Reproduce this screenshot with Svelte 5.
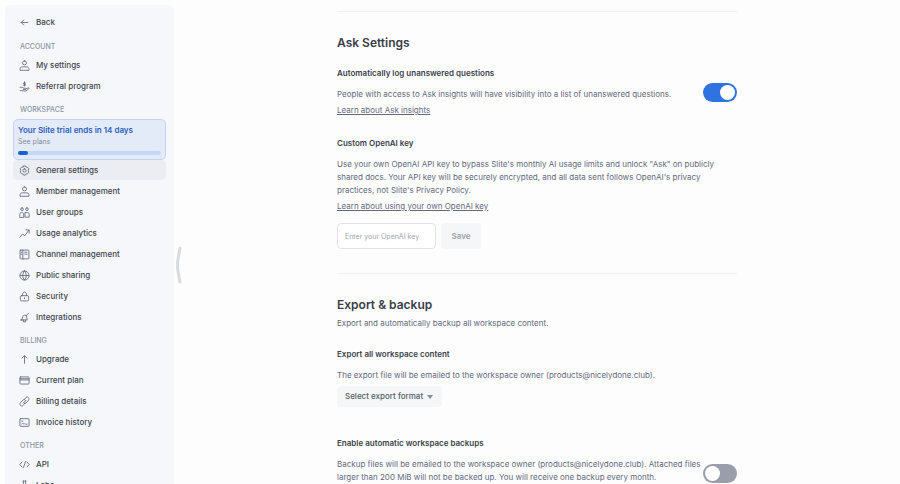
<script>
  // Workspace settings: sidebar navigation + "Ask" and "Export & backup" sections
  let current = $state('General settings');
  let logQuestions = $state(true);
  let autoBackup = $state(false);
  let apiKey = $state('');
  let format = $state('');

  const trial = { days: 14, progress: 7 };

  const sections = [
    {
      title: 'Account',
      items: [
        { name: 'My settings', icon: 'user' },
        { name: 'Referral program', icon: 'referral' }
      ]
    },
    {
      title: 'Workspace',
      trial: true,
      items: [
        { name: 'General settings', icon: 'gear' },
        { name: 'Member management', icon: 'user' },
        { name: 'User groups', icon: 'groups' },
        { name: 'Usage analytics', icon: 'chart' },
        { name: 'Channel management', icon: 'channel' },
        { name: 'Public sharing', icon: 'globe' },
        { name: 'Security', icon: 'lock' },
        { name: 'Integrations', icon: 'plug' }
      ]
    },
    {
      title: 'Billing',
      items: [
        { name: 'Upgrade', icon: 'up' },
        { name: 'Current plan', icon: 'card' },
        { name: 'Billing details', icon: 'clip' },
        { name: 'Invoice history', icon: 'invoice' }
      ]
    },
    {
      title: 'Other',
      items: [
        { name: 'API', icon: 'code' },
        { name: 'Labs', icon: 'flask' }
      ]
    }
  ];

  // stroke paths on a 20x20 grid
  const icons = {
    back: 'M16 10H4M8.500 5.500L4 10l4.500 4.500',
    user: 'M10 1.500a3.700 3.700 0 1 1 0 7.400a3.700 3.700 0 0 1 0-7.400zM1.800 18v-1c0-2.800 1.700-4.500 4.200-4.500h8c2.500 0 4.200 1.700 4.200 4.500v1z',
    referral: 'M10 1.500v7.500M12 3.500c-1-1-4-1-4 .7 0 1.800 4 1 4 2.800 0 1.500-3 1.500-4.200.4M2 11.500c3-1 5 .5 6.500 1.500h3c1.500 0 1.500 2.500 0 2.500H8M12.500 14.500l4-2c1.500-.5 2.500 1 1 2L13 18c-3 1-6-1-11-.5',
    gear: 'M8.300 1.700h3.400l1 2 2.500.2 2.500 2.900-.8 3.200.8 3.200-2.500 2.900-2.500.2-1 2H8.300l-1-2-2.500-.2-2.500-2.900.8-3.200-.8-3.200 2.500-2.900 2.500-.2zM10 7a3 3 0 1 1 0 6a3 3 0 0 1 0-6z',
    groups: 'M5.500 1.500a2.500 2.500 0 1 1 0 5a2.500 2.500 0 0 1 0-5zM14.500 1.500a2.500 2.500 0 1 1 0 5a2.500 2.500 0 0 1 0-5zM1.500 18.500v-5c0-2 1-3.500 2.700-3.500h1.600c1.700 0 2.700 1.500 2.700 3.500v5zM11.500 10h4c2 0 3 1.500 3 3.500v5h-7z',
    chart: 'M1.500 17l5-6 4 3L18 4M12.500 3.500H18.500V9',
    channel: 'M3 2h14c.6 0 1 .4 1 1v14c0 .6-.4 1-1 1H3c-.6 0-1-.4-1-1V3c0-.6.400-1 1-1zM7 2v16M10.500 6h4M10.500 9.500h4M4 6h1M4 9.500h1',
    globe: 'M10 1.700a8.300 8.300 0 1 1 0 16.600a8.300 8.300 0 0 1 0-16.600zM2 10h16M10 2c-4.500 4-4.500 12 0 16M10 2c4.500 4 4.500 12 0 16',
    lock: 'M4.500 8.500h11c1.200 0 2 .8 2 2V16c0 1.200-.8 2-2 2h-11c-1.200 0-2-.8-2-2v-5.500c0-1.200.8-2 2-2zM6.500 8.500V6c0-5.300 7-5.300 7 0v2.500M10 12.500v1.500',
    plug: 'M5 14.500L7 8c.8-2.500 4-3 6-1.500M5 14.500h10l-1.500-8M8 14.500V18h4v-3.500M13 6.500L17.500 2M2.500 14.500H5',
    up: 'M10 17V3M5.500 7.500L10 3l4.500 4.500',
    card: 'M3 3.500h14c.8 0 1.300.5 1.300 1.300v10.400c0 .8-.5 1.300-1.300 1.300H3c-.8 0-1.300-.5-1.300-1.300V4.800c0-.8.5-1.300 1.300-1.300zM2 6.800h16M2 9h16',
    clip: 'M8.500 12.500l4-4.500M9 7l3.500-4c3-3 7.500 1 5 4.500L13 12.500c-1.500 1.500-3.500 1.200-4.500 0M11 13l-3.500 4c-3 3-7.500-1-5-4.500L7 7.500c1.500-1.500 3.500-1.200 4.500 0',
    invoice: 'M3 3h14c.8 0 1.300.5 1.300 1.300v11.400c0 .8-.5 1.300-1.300 1.300H3c-.8 0-1.300-.5-1.300-1.300V4.300C1.700 3.500 2.200 3 3 3zM5 7.500h2M5 12.500c2-2.500 2.500 1 4.500 0M12 13h3',
    code: 'M5.500 5.500L1.500 10l4 4.500M14.500 5.500l4 4.500-4 4.500M12 4.500l-4 11',
    flask: 'M7 2h6M8 2v6L3 18h14L12 8V2M6 13h8'
  };
</script>

{#snippet icon(name)}
  <svg class="icon" viewBox="0 0 20 20" aria-hidden="true"><path d={icons[name]} /></svg>
{/snippet}

<div class="app">
  <aside>
    <nav>
      <button class="item back">{@render icon('back')}Back</button>

      {#each sections as s}
        <div class="label">{s.title}</div>
        {#if s.trial}
          <a class="trial" href="#plans">
            <strong>Your Slite trial ends in {trial.days} days</strong>
            <span>See plans</span>
            <div class="bar"><div class="fill" style={`width: ${trial.progress}%`}></div></div>
          </a>
        {/if}
        <div class="items">
          {#each s.items as it}
            <button class="item" class:on={current === it.name} onclick={() => (current = it.name)}>
              {@render icon(it.icon)}{it.name}
            </button>
          {/each}
        </div>
      {/each}
    </nav>
  </aside>

  <button class="handle" aria-label="Collapse sidebar">
    <svg viewBox="0 0 8 40" aria-hidden="true"><path d="M5 3L3 14Q2 20 3 26L5 37" /></svg>
  </button>

  <main>
    <div class="content">
      <section>
        <h2>Ask Settings</h2>
        <div class="row">
          <div class="text">
            <h3><label for="log">Automatically log unanswered questions</label></h3>
            <p>People with access to Ask insights will have visibility into a list of unanswered questions.</p>
            <a href="#insights">Learn about Ask insights</a>
          </div>
          <input id="log" class="switch" type="checkbox" role="switch" bind:checked={logQuestions} />
        </div>

        <div class="block">
          <h3><label for="key">Custom OpenAI key</label></h3>
          <p>Use your own OpenAI API key to bypass Slite's monthly AI usage limits and unlock "Ask" on publicly shared docs. Your API key will be securely encrypted, and all data sent follows OpenAI's privacy practices, not Slite's Privacy Policy.</p>
          <a href="#openai">Learn about using your own OpenAI key</a>
          <div class="form">
            <input id="key" class="key" type="text" placeholder="Enter your OpenAI key" bind:value={apiKey} />
            <button class="save" disabled={!apiKey}>Save</button>
          </div>
        </div>
      </section>

      <section>
        <h2>Export &amp; backup</h2>
        <p class="sub">Export and automatically backup all workspace content.</p>
        <div class="block">
          <h3><label for="format">Export all workspace content</label></h3>
          <p>The export file will be emailed to the workspace owner (products@nicelydone.club).</p>
          <div class="select">
            <select id="format" bind:value={format}>
              <option value="">Select export format</option>
              <option value="md">Markdown</option>
              <option value="html">HTML</option>
            </select>
            <svg viewBox="0 0 6 4" aria-hidden="true"><path d="M0 0h6L3 4z" /></svg>
          </div>
        </div>

        <div class="row backup">
          <div class="text">
            <h3><label for="backup">Enable automatic workspace backups</label></h3>
            <p>Backup files will be emailed to the workspace owner (products@nicelydone.club). Attached files larger than 200 MiB will not be backed up. You will receive one backup every month.</p>
          </div>
          <input id="backup" class="switch" type="checkbox" role="switch" bind:checked={autoBackup} />
        </div>
      </section>
    </div>
  </main>
</div>

<style>
  :global(body) { margin: 0; background: #fdfdfe; overflow: hidden; }
  .app { display: flex; height: 100vh; overflow: hidden; font-family: Inter, "Liberation Sans", sans-serif; font-size: 8px; line-height: 13px; color: #646a7b; }
  button, input, select { font: inherit; color: inherit; margin: 0; }
  button { border: 0; background: none; padding: 0; cursor: pointer; }

  aside { flex: 0 0 169px; box-sizing: border-box; margin: 5px 0 0 5px; padding: 7px 8px 0; background: #f5f7fa; border-radius: 6px 6px 0 0; overflow: hidden; }
  .items { display: grid; gap: 1px; }
  .item { display: flex; align-items: center; gap: 6px; width: 100%; height: 20px; padding: 0 6px; border-radius: 4px; color: #41454f; font-weight: 500; text-align: left; }
  .item.on { background: #ebedf2; }
  .back { margin-bottom: 7px; }
  .icon { width: 11px; height: 11px; flex: none; fill: none; stroke: #5d6478; stroke-width: 1.5; stroke-linecap: round; stroke-linejoin: round; }
  .label { margin-top: 6px; padding-left: 7px; font-size: 7px; line-height: 16px; font-weight: 500; text-transform: uppercase; color: #8f95a5; }
  .back + .label { margin-top: 0; }

  .trial { display: block; box-sizing: border-box; margin-top: 1px; padding: 4px; height: 41px; border: 1px solid #c3d3f1; border-radius: 5px; background: #e4ebf8; text-decoration: none; }
  .trial strong { display: block; line-height: 12px; font-weight: 600; color: #2b60c0; }
  .trial span { display: block; font-size: 7px; line-height: 12px; color: #858b9b; }
  .bar { height: 4px; margin-top: 3px; border-radius: 2px; background: #c5d7f6; }
  .fill { height: 100%; border-radius: 2px; background: #1c61cf; }

  .handle { position: absolute; left: 175px; top: 245px; width: 8px; height: 40px; }
  .handle svg { display: block; width: 8px; height: 40px; fill: none; stroke: #d9dadc; stroke-width: 3; stroke-linecap: round; }

  main { flex: 1; min-width: 0; padding: 11px 16px 0; }
  .content { max-width: 400px; margin: 0 auto; }
  section { border-top: 1px solid #eff0f3; padding: 23px 0 24px; }
  h2, h3, p { margin: 0; }
  h2 { font-size: 12px; line-height: 16px; font-weight: 600; color: #3a3e48; }
  h3 { font-size: 8px; line-height: 13px; font-weight: 600; color: #3a3e48; margin-bottom: 8px; }
  .sub { margin-top: 4px; }
  .text a, .block a { display: table; margin-top: 3px; color: inherit; text-decoration: underline; }
  .row { display: flex; align-items: center; justify-content: space-between; margin-top: 16px; }
  .text { flex: 1; min-width: 0; }
  .block { margin-top: 20px; }
  .sub + .block { margin-top: 18px; }

  .switch { appearance: none; flex: none; box-sizing: border-box; width: 34px; height: 19px; padding: 2px; border-radius: 10px; background: #9a9eac; cursor: pointer; }
  .switch::before { content: ''; display: block; width: 15px; height: 15px; border-radius: 50%; background: #fff; }
  .switch:checked { background: #2f73e0; }
  .switch:checked::before { margin-left: auto; }

  .form { display: flex; gap: 5px; margin-top: 10px; }
  .key { box-sizing: border-box; width: 99px; height: 26px; padding: 0 7px; border: 1px solid #dfe2e8; border-radius: 4px; background: #fff; outline: none; }
  .key::placeholder { font-size: 7px; color: #a0a5b2; opacity: 1; }
  .save { width: 40px; border-radius: 4px; background: #f4f6f7; font-weight: 600; color: #9ba0ab; }

  .select { position: relative; width: 105px; margin-top: 4px; }
  .select select { appearance: none; width: 100%; height: 21px; padding: 0 18px 0 8px; border: 0; border-radius: 4px; background: #f4f6f7; font-weight: 500; color: #565c6a; }
  .select svg { position: absolute; right: 9px; top: 9px; width: 6px; height: 4px; fill: #858b98; pointer-events: none; }
  .backup { margin-top: 30px; }
  .backup .text { padding-bottom: 26px; }
</style>
